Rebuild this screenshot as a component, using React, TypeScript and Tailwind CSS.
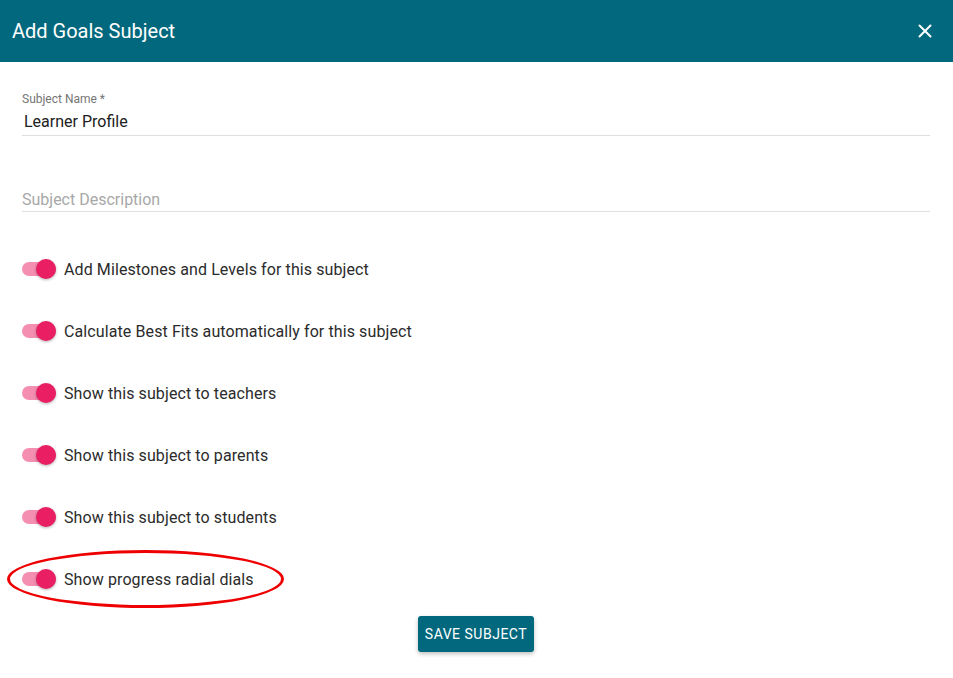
import { X } from 'lucide-react';

const toggles = [
  'Add Milestones and Levels for this subject',
  'Calculate Best Fits automatically for this subject',
  'Show this subject to teachers',
  'Show this subject to parents',
  'Show this subject to students',
  'Show progress radial dials',
];

function Toggle() {
  return (
    <div className="relative w-[34px] h-[20px] flex items-center">
      <div className="w-[34px] h-[14px] rounded-full bg-[#f48fb1]" />
      <div className="absolute right-0 top-0 w-[20px] h-[20px] rounded-full bg-[#e91e63] shadow-[0_1px_3px_rgba(0,0,0,0.3)]" />
    </div>
  );
}

export default function App() {
  return (
    <div className="w-[953px] h-[678px] bg-white font-['Roboto',sans-serif] text-[#212121] relative">
      {/* Header */}
      <div className="h-[62px] bg-[#02687d] flex items-center justify-between pl-3 pr-[17px]">
        <h1 className="text-[20px] text-white font-normal">Add Goals Subject</h1>
        <X className="w-[22px] h-[22px] text-white" strokeWidth={2.2} />
      </div>

      <div className="pl-[22px] pr-[23px] pt-[30px]">
        {/* Subject name */}
        <div className="border-b border-[#e0e0e0] pb-[4px]">
          <div className="text-[12px] leading-[14px] text-[#757575]">Subject Name *</div>
          <div className="mt-[6px] text-[16px] leading-[19px] pl-[2px]">Learner Profile</div>
        </div>

        {/* Description */}
        <div className="mt-[54px] border-b border-[#e0e0e0] pb-[2px]">
          <div className="text-[16px] leading-[19px] text-[#a8a8a8]">Subject Description</div>
        </div>

        {/* Switches */}
        <div className="mt-[38px] flex flex-col gap-[24px]">
          {toggles.map((label) => (
            <div key={label} className="h-[38px] flex items-center gap-[8px]">
              <Toggle />
              <span className="text-[16px] leading-[19px] tracking-[0.1px] text-[#2b2b2b]">{label}</span>
            </div>
          ))}
        </div>

        <div className="mt-[18px] flex justify-center">
          <button className="h-[36px] w-[116px] rounded-[3px] bg-[#02687d] text-white text-[14px] font-normal tracking-[0.5px] uppercase shadow-[0_2px_4px_rgba(0,0,0,0.25)]">
            Save Subject
          </button>
        </div>
      </div>

      {/* Annotation ellipse */}
      <div className="absolute left-[7px] top-[550px] w-[277px] h-[58px] rounded-[50%] border-[3.5px] border-[#ee0000]" />
    </div>
  );
}
